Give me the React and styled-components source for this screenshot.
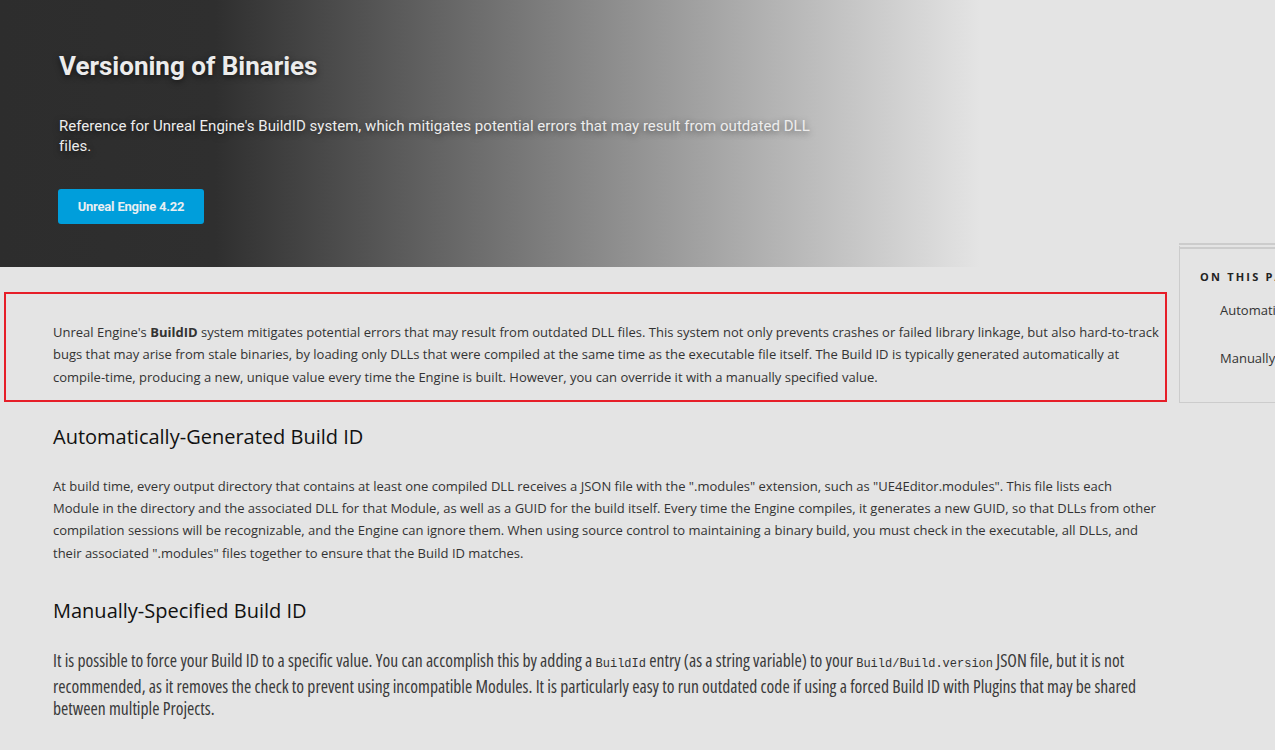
import React from 'react';
import styled, { createGlobalStyle } from 'styled-components';

const GlobalStyle = createGlobalStyle`
  html, body {
    margin: 0;
    padding: 0;
    background: #e4e4e4;
    overflow: hidden;
  }
  body {
    font-family: "Open Sans", "Liberation Sans", sans-serif;
    color: #333;
  }
`;

const Page = styled.div`
  display: grid;
  grid-template-columns: 1179px 300px;
  width: 1479px;
  min-height: 750px;
`;

const Main = styled.main`
  display: flex;
  flex-direction: column;
`;

const Hero = styled.header`
  height: 267px;
  box-sizing: border-box;
  padding: 48px 0 0 59px;
  background: linear-gradient(90deg, #2d2d2d 0px, #2f2f2f 215px, #e4e4e4 980px);
`;

const HeroTitle = styled.h1`
  margin: 0;
  font-family: Roboto, "Liberation Sans", sans-serif;
  font-weight: 700;
  font-size: 26px;
  line-height: 36px;
  color: #ececec;
  text-shadow: 0 2px 6px rgba(0, 0, 0, 0.55);
`;

const HeroText = styled.p`
  margin: 32px 0 0;
  max-width: 780px;
  font-family: Roboto, "Liberation Sans", sans-serif;
  font-size: 15px;
  line-height: 20px;
  letter-spacing: 0.03px;
  color: #ededed;
  text-shadow: 0 2px 6px rgba(0, 0, 0, 0.5);
`;

const VersionButton = styled.button`
  margin: 33px 0 0 -1px;
  width: 146px;
  height: 35px;
  border: none;
  border-radius: 3px;
  background: #009edb;
  color: #e8eef2;
  font-family: Roboto, "Liberation Sans", sans-serif;
  font-weight: 700;
  font-size: 13px;
  letter-spacing: -0.2px;
  cursor: pointer;
`;

const Content = styled.div`
  padding: 25px 12px 0 4px;
`;

const Highlight = styled.section`
  border: 2px solid #e61e28;
  padding: 27px 3px 12px 47px;
`;

const Body = styled.div`
  padding: 0 8px 0 49px;
`;

const Paragraph = styled.p`
  margin: 0;
  font-size: 13px;
  line-height: 22.3px;
  color: #333;
`;

const NarrowParagraph = styled(Paragraph)`
  font-size: 17.6px;
  font-stretch: condensed;
  line-height: 22px;
  color: #3a3a3a;
`;

const Heading = styled.h2`
  margin: ${(p) => (p.$first ? '21px' : '33px')} 0 24px;
  font-size: 20px;
  font-weight: 400;
  line-height: 28px;
  color: #111;
`;

const Code = styled.code`
  font-family: "Liberation Mono", "DejaVu Sans Mono", monospace;
  font-size: 12px;
  color: #333;
`;

const Aside = styled.aside`
  padding-top: 243px;
`;

const TocBox = styled.nav`
  height: 160px;
  box-sizing: border-box;
  border: 1px solid #cccccc;
  border-top: 6px double #cccccc;
  padding: 20px 0 0 20px;
`;

const TocTitle = styled.div`
  font-family: "Open Sans", "Liberation Sans", sans-serif;
  font-weight: 700;
  font-size: 11px;
  letter-spacing: 2.2px;
  color: #222;
  margin-bottom: 14px;
`;

const TocItem = styled.div`
  padding-left: 20px;
  font-size: 13px;
  line-height: 24px;
  color: #333;
  margin-bottom: 24px;
`;

export default function App() {
  return (
    <>
      <GlobalStyle />
      <Page>
        <Main>
          <Hero>
            <HeroTitle>Versioning of Binaries</HeroTitle>
            <HeroText>
              Reference for Unreal Engine's BuildID system, which mitigates potential errors that may result from outdated DLL files.
            </HeroText>
            <VersionButton>Unreal Engine 4.22</VersionButton>
          </Hero>

          <Content>
            <Highlight>
              <Paragraph>
                Unreal Engine's <strong>BuildID</strong> system mitigates potential errors that may result from outdated DLL files. This system not only prevents crashes or failed library linkage, but also hard-to-track bugs that may arise from stale binaries, by loading only DLLs that were compiled at the same time as the executable file itself. The Build ID is typically generated automatically at compile-time, producing a new, unique value every time the Engine is built. However, you can override it with a manually specified value.
              </Paragraph>
            </Highlight>

            <Body>
              <Heading $first>Automatically-Generated Build ID</Heading>
              <Paragraph>
                At build time, every output directory that contains at least one compiled DLL receives a JSON file with the ".modules" extension, such as "UE4Editor.modules". This file lists each Module in the directory and the associated DLL for that Module, as well as a GUID for the build itself. Every time the Engine compiles, it generates a new GUID, so that DLLs from other compilation sessions will be recognizable, and the Engine can ignore them. When using source control to maintaining a binary build, you must check in the executable, all DLLs, and their associated ".modules" files together to ensure that the Build ID matches.
              </Paragraph>

              <Heading>Manually-Specified Build ID</Heading>
              <NarrowParagraph>
                It is possible to force your Build ID to a specific value. You can accomplish this by adding a <Code>BuildId</Code> entry (as a string variable) to your <Code>Build/Build.version</Code> JSON file, but it is not recommended, as it removes the check to prevent using incompatible Modules. It is particularly easy to run outdated code if using a forced Build ID with Plugins that may be shared between multiple Projects.
              </NarrowParagraph>
            </Body>
          </Content>
        </Main>

        <Aside>
          <TocBox>
            <TocTitle>ON THIS PAGE</TocTitle>
            <TocItem>Automatically-Generated Build ID</TocItem>
            <TocItem>Manually-Specified Build ID</TocItem>
          </TocBox>
        </Aside>
      </Page>
    </>
  );
}
